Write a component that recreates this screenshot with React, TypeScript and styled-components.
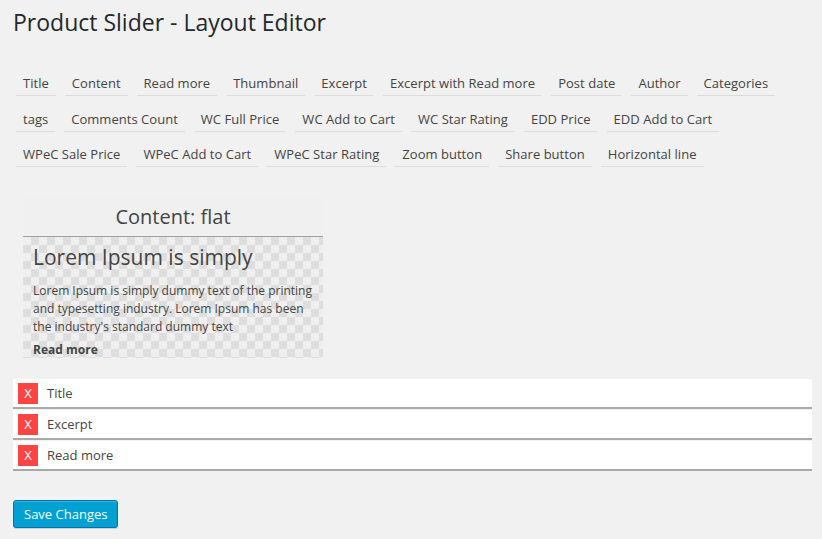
import styled, { createGlobalStyle } from 'styled-components';

const GlobalStyle = createGlobalStyle`
    html, body {
        margin: 0;
        padding: 0;
        background: #f1f1f1;
    }
    body {
        font-family: "Open Sans", "Liberation Sans", sans-serif;
        font-size: 13px;
        color: #444;
    }
`;

const fields = [
    "Title", "Content", "Read more", "Thumbnail", "Excerpt", "Excerpt with Read more", "Post date", "Author", "Categories",
    "tags", "Comments Count", "WC Full Price", "WC Add to Cart", "WC Star Rating", "EDD Price", "EDD Add to Cart",
    "WPeC Sale Price", "WPeC Add to Cart", "WPeC Star Rating", "Zoom button", "Share button", "Horizontal line",
];

const selected = ["Title", "Excerpt", "Read more"];

const App = () => {
    return (
        <Page>
            <GlobalStyle />
            <Heading>Product Slider - Layout Editor</Heading>
            <Palette>
                {fields.map((field) => (
                    <Chip key={field}>{field}</Chip>
                ))}
            </Palette>
            <Preview>
                <PreviewHeader>Content: flat</PreviewHeader>
                <PreviewBody>
                    <PreviewTitle>Lorem Ipsum is simply</PreviewTitle>
                    <PreviewText>
                        Lorem Ipsum is simply dummy text of the printing and typesetting industry. Lorem Ipsum has been the industry's standard dummy text
                    </PreviewText>
                    <PreviewMore>Read more</PreviewMore>
                </PreviewBody>
            </Preview>
            <FieldList>
                {selected.map((item) => (
                    <FieldRow key={item}>
                        <RemoveButton>X</RemoveButton>
                        <span>{item}</span>
                    </FieldRow>
                ))}
            </FieldList>
            <SaveButton type="button">Save Changes</SaveButton>
        </Page>
    );
};

const Page = styled.div`
    padding: 0 10px 20px 13px;
    display: flex;
    flex-direction: column;
    align-items: flex-start;
`;

const Heading = styled.h1`
    margin: 0;
    padding: 8px 0 0 0;
    font-size: 23px;
    font-weight: 400;
    line-height: 29px;
    color: #23282d;
`;

const Palette = styled.div`
    display: flex;
    flex-wrap: wrap;
    gap: 9.5px 9px;
    padding: 33px 0 0 3px;
    width: 100%;
    box-sizing: border-box;
`;

const Chip = styled.div`
    height: 25px;
    line-height: 26px;
    padding: 0 7px;
    background: #f1f1f1;
    border-bottom: 1px solid #dcdcdc;
    color: #444;
    font-size: 13px;
    letter-spacing: 0.03px;
    white-space: nowrap;
`;

const Preview = styled.div`
    width: 300px;
    margin: 31px 0 0 10px;
`;

const PreviewHeader = styled.div`
    height: 38px;
    line-height: 38px;
    text-align: center;
    font-size: 20px;
    color: #444;
    background: #f0f0f0;
    border-bottom: 1px solid #a0a0a0;
`;

const PreviewBody = styled.div`
    padding: 6px 10px 0 10px;
    height: 121px;
    box-sizing: border-box;
    background-color: #efefef;
    background-image:
        linear-gradient(45deg, #dedede 25%, transparent 25%, transparent 75%, #dedede 75%),
        linear-gradient(45deg, #dedede 25%, transparent 25%, transparent 75%, #dedede 75%);
    background-size: 16px 16px;
    background-position: 0 0, 8px 8px;
`;

const PreviewTitle = styled.div`
    font-size: 21px;
    line-height: 28px;
    color: #444;
`;

const PreviewText = styled.p`
    margin: 11px 0 6px 0;
    font-size: 12px;
    line-height: 18px;
    color: #444;
`;

const PreviewMore = styled.div`
    font-size: 12px;
    font-weight: 700;
    line-height: 16px;
    color: #444;
`;

const FieldList = styled.div`
    width: 100%;
    margin-top: 21px;
    display: flex;
    flex-direction: column;
    gap: 1px;
`;

const FieldRow = styled.div`
    height: 28px;
    display: flex;
    align-items: center;
    gap: 9px;
    padding-left: 5px;
    background: #fff;
    border-bottom: 2px solid #a9a9a9;
    font-size: 13px;
    color: #444;
`;

const RemoveButton = styled.div`
    width: 20px;
    height: 21px;
    line-height: 21px;
    text-align: center;
    background: #ff4444;
    color: #fff;
    font-size: 13px;
`;

const SaveButton = styled.button`
    margin-top: 29px;
    height: 28px;
    padding: 0 10px 1px;
    background: #00a0d2;
    border: 1px solid #0073aa;
    border-radius: 3px;
    box-shadow: inset 0 1px 0 rgba(120, 200, 230, 0.5), 0 1px 0 rgba(0, 0, 0, 0.15);
    color: #fff;
    font-family: "Open Sans", "Liberation Sans", sans-serif;
    font-size: 13px;
    cursor: pointer;
`;

export default App;
